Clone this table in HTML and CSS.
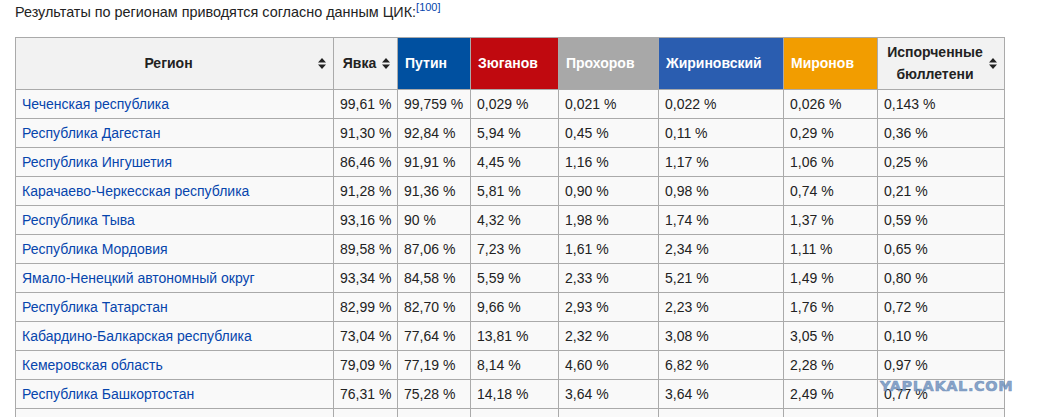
FILE: index.html
```html
<!DOCTYPE html>
<html lang="ru">
<head>
<meta charset="utf-8">
<title>Результаты по регионам</title>
<link rel="stylesheet" href="styles.css">
</head>
<body>
<p class="intro">Результаты по регионам приводятся согласно данным ЦИК:<sup class="ref"><a href="#">[100]</a></sup></p>
<table class="wikitable">
  <colgroup>
    <col class="c-region"><col class="c-turnout"><col class="c-putin"><col class="c-zyuganov"><col class="c-prokhorov"><col class="c-zhirinovsky"><col class="c-mironov"><col class="c-spoiled">
  </colgroup>
  <thead>
    <tr>
      <th class="sortable"><div class="th-inner"><span class="th-label">Регион</span><svg class="sort" viewBox="0 0 8 11" width="8" height="11"><path d="M4 0 L8 4.5 H0 Z M4 11 L8 6.5 H0 Z" fill="#222"/></svg></div></th>
      <th class="sortable"><div class="th-inner"><span class="th-label">Явка</span><svg class="sort" viewBox="0 0 8 11" width="8" height="11"><path d="M4 0 L8 4.5 H0 Z M4 11 L8 6.5 H0 Z" fill="#222"/></svg></div></th>
      <th class="cand putin">Путин</th>
      <th class="cand zyuganov">Зюганов</th>
      <th class="cand prokhorov">Прохоров</th>
      <th class="cand zhirinovsky">Жириновский</th>
      <th class="cand mironov">Миронов</th>
      <th class="sortable"><div class="th-inner"><span class="th-label">Испорченные бюллетени</span><svg class="sort" viewBox="0 0 8 11" width="8" height="11"><path d="M4 0 L8 4.5 H0 Z M4 11 L8 6.5 H0 Z" fill="#222"/></svg></div></th>
    </tr>
  </thead>
  <tbody>
    <tr><td><a href="#">Чеченская республика</a></td><td>99,61 %</td><td>99,759 %</td><td>0,029 %</td><td>0,021 %</td><td>0,022 %</td><td>0,026 %</td><td>0,143 %</td></tr>
    <tr><td><a href="#">Республика Дагестан</a></td><td>91,30 %</td><td>92,84 %</td><td>5,94 %</td><td>0,45 %</td><td>0,11 %</td><td>0,29 %</td><td>0,36 %</td></tr>
    <tr><td><a href="#">Республика Ингушетия</a></td><td>86,46 %</td><td>91,91 %</td><td>4,45 %</td><td>1,16 %</td><td>1,17 %</td><td>1,06 %</td><td>0,25 %</td></tr>
    <tr><td><a href="#">Карачаево-Черкесская республика</a></td><td>91,28 %</td><td>91,36 %</td><td>5,81 %</td><td>0,90 %</td><td>0,98 %</td><td>0,74 %</td><td>0,21 %</td></tr>
    <tr><td><a href="#">Республика Тыва</a></td><td>93,16 %</td><td>90 %</td><td>4,32 %</td><td>1,98 %</td><td>1,74 %</td><td>1,37 %</td><td>0,59 %</td></tr>
    <tr><td><a href="#">Республика Мордовия</a></td><td>89,58 %</td><td>87,06 %</td><td>7,23 %</td><td>1,61 %</td><td>2,34 %</td><td>1,11 %</td><td>0,65 %</td></tr>
    <tr><td><a href="#">Ямало-Ненецкий автономный округ</a></td><td>93,34 %</td><td>84,58 %</td><td>5,59 %</td><td>2,33 %</td><td>5,21 %</td><td>1,49 %</td><td>0,80 %</td></tr>
    <tr><td><a href="#">Республика Татарстан</a></td><td>82,99 %</td><td>82,70 %</td><td>9,66 %</td><td>2,93 %</td><td>2,23 %</td><td>1,76 %</td><td>0,72 %</td></tr>
    <tr><td><a href="#">Кабардино-Балкарская республика</a></td><td>73,04 %</td><td>77,64 %</td><td>13,81 %</td><td>2,32 %</td><td>3,08 %</td><td>3,05 %</td><td>0,10 %</td></tr>
    <tr><td><a href="#">Кемеровская область</a></td><td>79,09 %</td><td>77,19 %</td><td>8,14 %</td><td>4,60 %</td><td>6,82 %</td><td>2,28 %</td><td>0,97 %</td></tr>
    <tr><td><a href="#">Республика Башкортостан</a></td><td>76,31 %</td><td>75,28 %</td><td>14,18 %</td><td>3,64 %</td><td>3,64 %</td><td>2,49 %</td><td>0,77 %</td></tr>
    <tr class="cut"><td>&nbsp;</td><td>&nbsp;</td><td>&nbsp;</td><td>&nbsp;</td><td>&nbsp;</td><td>&nbsp;</td><td>&nbsp;</td><td>&nbsp;</td></tr>
  </tbody>
</table>
<div class="watermark">YAPLAKAL.COM</div>
</body>
</html>
```
FILE: styles.css
```css
html, body {
  margin: 0;
  padding: 0;
  background: #fff;
}
body {
  font-family: "Liberation Sans", Arial, sans-serif;
  font-size: 14px;
  color: #222;
  padding: 0 15px;
  position: relative;
  height: 417px;
  overflow: hidden;
}
.intro {
  margin: 0;
  padding-top: 2px;
  line-height: 20px;
  height: 35px;
  font-size: 14.4px;
}
.ref {
  font-size: 11px;
  line-height: 1;
  vertical-align: 6px;
}
a {
  color: #0645ad;
  text-decoration: none;
}
.wikitable {
  border-collapse: collapse;
  table-layout: fixed;
  width: 989px;
  background: #f9f9f9;
  color: #222;
}
.c-region { width: 318px; }
.c-turnout { width: 64px; }
.c-putin { width: 73px; }
.c-zyuganov { width: 88px; }
.c-prokhorov { width: 100px; }
.c-zhirinovsky { width: 125px; }
.c-mironov { width: 94px; }
.c-spoiled { width: 127px; }
.wikitable th,
.wikitable td {
  border: 1px solid #aaa;
  padding: 4px 6px;
  line-height: 20px;
  text-align: left;
  vertical-align: middle;
  white-space: nowrap;
}
.wikitable th {
  background: #f2f2f2;
  font-weight: bold;
  line-height: 21.5px;
  padding: 4px 7px;
  white-space: normal;
}
.th-inner {
  display: flex;
  align-items: center;
  gap: 4px;
}
.th-label {
  flex: 1;
  text-align: center;
}
.sort {
  flex: none;
  display: block;
}
.cand {
  color: #fff;
}
.putin { background: #0050a0 !important; }
.zyuganov { background: #c0090f !important; }
.prokhorov { background: #a8a8a8 !important; }
.zhirinovsky { background: #2a5db0 !important; }
.mironov { background: #f29d00 !important; }
.watermark {
  position: absolute;
  left: 880px;
  top: 379px;
  font-family: "DejaVu Sans", Verdana, sans-serif;
  font-weight: bold;
  font-size: 14.5px;
  line-height: 14px;
  letter-spacing: 0.6px;
  color: rgba(105, 140, 185, 0.8);
  -webkit-text-stroke: 0.6px rgba(105, 140, 185, 0.8);
  pointer-events: none;
}
```
